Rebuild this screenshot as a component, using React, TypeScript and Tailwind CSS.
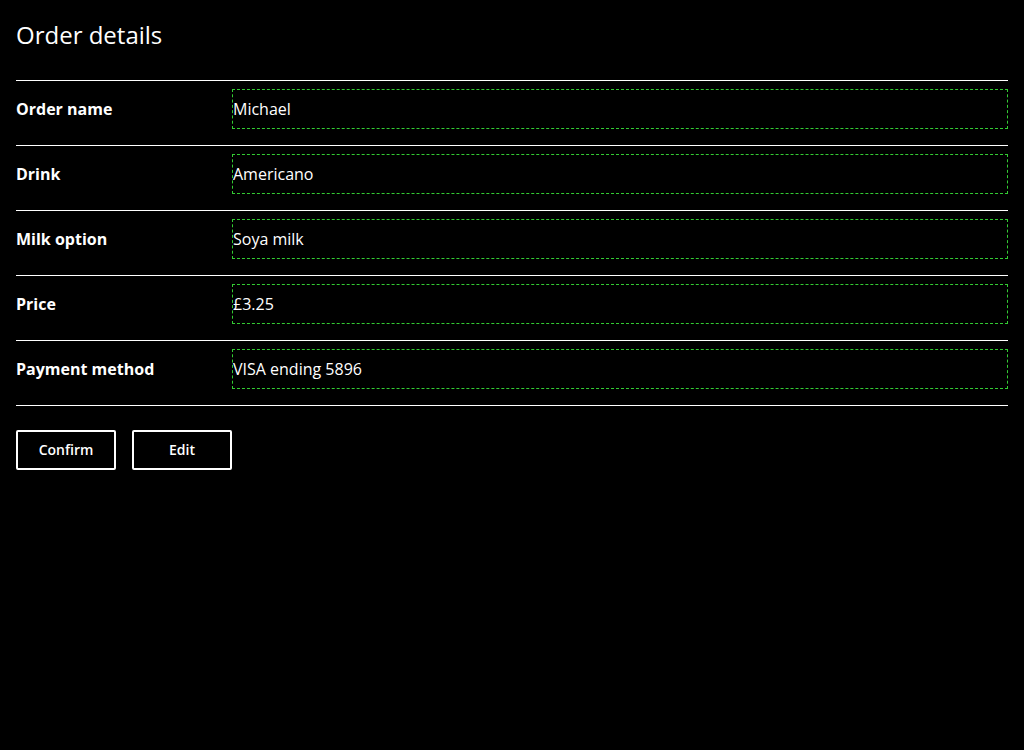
import React from 'react';

const rows = [
  { label: 'Order name', value: 'Michael' },
  { label: 'Drink', value: 'Americano' },
  { label: 'Milk option', value: 'Soya milk' },
  { label: 'Price', value: '£3.25' },
  { label: 'Payment method', value: 'VISA ending 5896' },
];

export default function App() {
  return (
    <div className="min-h-[750px] bg-black px-4 pt-[17px] text-white [font-family:'Open_Sans',sans-serif]">
      <h1 className="text-[24px] leading-[36px] font-normal">Order details</h1>

      <div className="mt-[27px] border-t border-white">
        {rows.map((r) => (
          <div
            key={r.label}
            className="grid grid-cols-[216px_1fr] items-center border-b border-white pt-2 pb-4"
          >
            <span className="text-base font-bold">{r.label}</span>
            <div className="flex h-10 items-center border border-dashed border-[#33cc33] text-base text-white">
              {r.value}
            </div>
          </div>
        ))}
      </div>

      <div className="mt-6 flex gap-4">
        <button className="h-10 w-[100px] rounded-[2px] border-2 border-white text-sm font-semibold text-white">
          Confirm
        </button>
        <button className="h-10 w-[100px] rounded-[2px] border-2 border-white text-sm font-semibold text-white">
          Edit
        </button>
      </div>
    </div>
  );
}
